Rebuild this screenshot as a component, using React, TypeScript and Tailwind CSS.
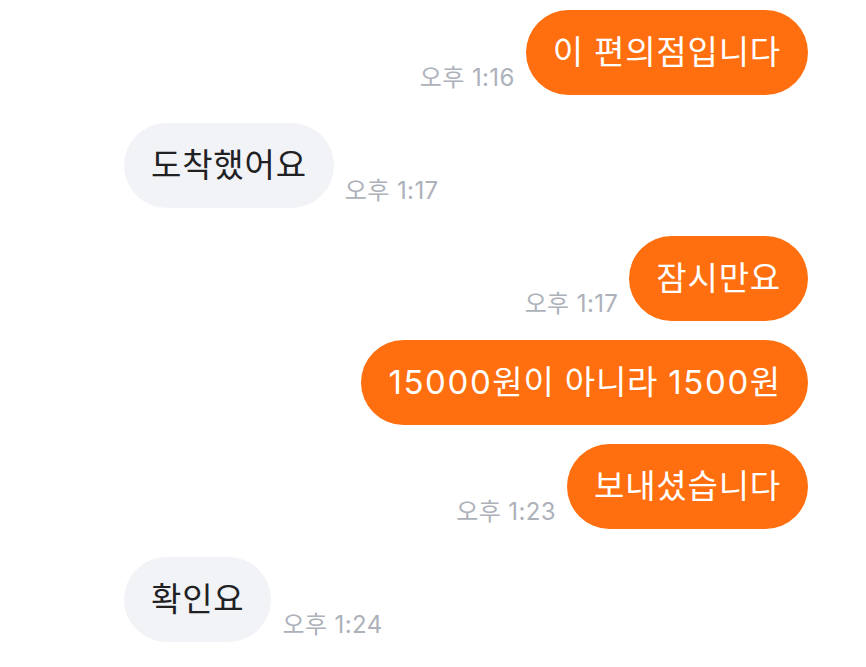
const font = { fontFamily: 'Inter, "Noto Sans CJK KR", "Noto Sans", sans-serif' };

type Msg = { mine: boolean; text: string; time?: string; gap: "lg" | "sm" };

const messages: Msg[] = [
  { mine: true, text: "이 편의점입니다", time: "오후 1:16", gap: "lg" },
  { mine: false, text: "도착했어요", time: "오후 1:17", gap: "lg" },
  { mine: true, text: "잠시만요", time: "오후 1:17", gap: "lg" },
  { mine: true, text: "15000원이 아니라 1500원", gap: "sm" },
  { mine: true, text: "보내셨습니다", time: "오후 1:23", gap: "sm" },
  { mine: false, text: "확인요", time: "오후 1:24", gap: "lg" },
];

function Time({ value }: { value: string }) {
  return (
    <span className="pb-[2px] text-[24px] leading-[30px] tracking-[0.4px] text-[#adb1ba]">{value}</span>
  );
}

// digits in the app's font run wider than Inter's, so give them a bit more room
function Text({ value }: { value: string }) {
  return (
    <>
      {value.split(/(\d+)/).map((part, i) =>
        /^\d+$/.test(part) ? (
          <span key={i} className="tracking-[1.6px]">
            {part}
          </span>
        ) : (
          <span key={i}>{part}</span>
        )
      )}
    </>
  );
}

export default function App() {
  return (
    <div className="min-h-screen w-full bg-white pl-[124px] pr-[58px] pt-[10px]" style={font}>
      {messages.map((m, i) => (
        <div
          key={i}
          className={`flex items-end gap-[11px] ${m.mine ? "justify-end" : "justify-start"} ${
            i === 0 ? "" : m.gap === "lg" ? "mt-[28px]" : "mt-[19px]"
          }`}
        >
          {m.mine && m.time && <Time value={m.time} />}
          <div
            className={`flex h-[85px] items-center whitespace-pre rounded-full px-[27px] text-[33px] tracking-[0.8px] ${
              m.mine ? "bg-[#ff6f0f] text-white" : "bg-[#f2f3f6] text-[#212124]"
            }`}
          >
            <Text value={m.text} />
          </div>
          {!m.mine && m.time && <Time value={m.time} />}
        </div>
      ))}
    </div>
  );
}
